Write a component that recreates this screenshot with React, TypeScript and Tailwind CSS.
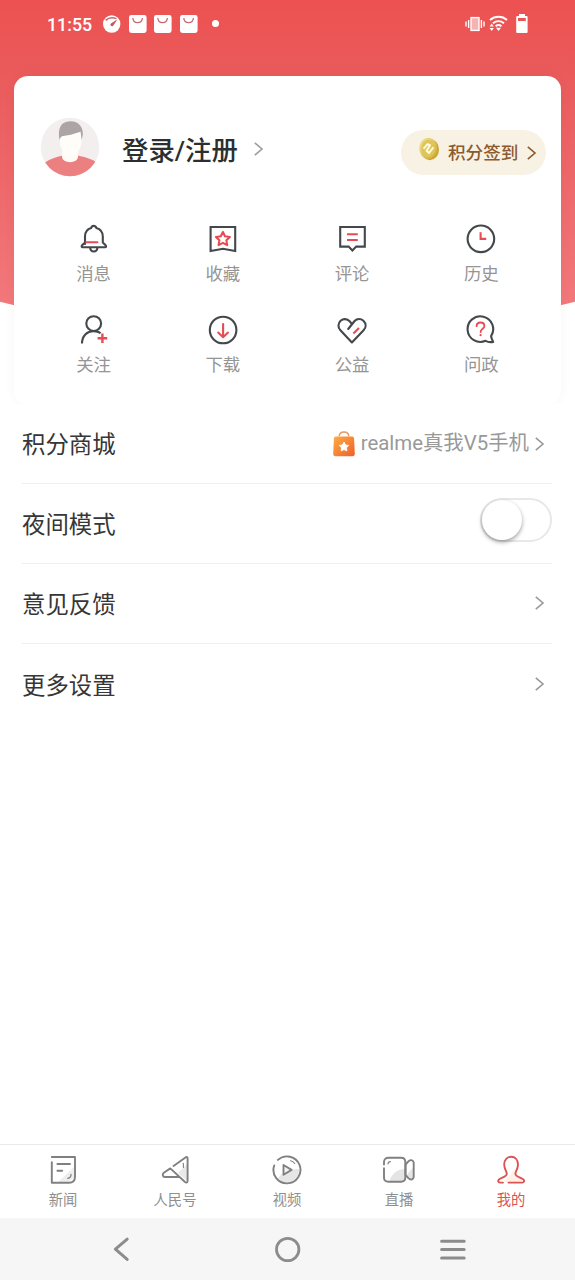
import type { ReactNode } from "react";

const DARK = "#44484a";
const RED = "#e84b52";
const GREY = "#808080";

function Glyph({ children }: { children: ReactNode }) {
  return (
    <svg width="32" height="32" viewBox="0 0 32 32" fill="none" stroke={DARK} strokeWidth="2.1" strokeLinejoin="round" strokeLinecap="round">
      {children}
    </svg>
  );
}

const services: { label: string; icon: ReactNode }[] = [
  {
    label: "消息",
    icon: (
      <Glyph>
        <path d="M7 21V13.5C7 8.8 9.6 6 13.2 5C13.7 3 14.8 2.9 15.7 2.9C16.7 2.9 17.7 3 18.3 5C22 6 24.8 8.8 24.8 13.5V19.5L27.8 22.6C28.4 23.4 28.1 24.3 27.2 24.3H4.6C3.6 24.3 3.3 23.3 3.9 22.6L7 19.4" />
        <path d="M12.2 25C12.4 27.2 13.8 28.5 15.8 28.5C17.8 28.5 19.2 27.2 19.4 25" />
        <path stroke={RED} d="M8.2 19.2H19.4" />
      </Glyph>
    ),
  },
  {
    label: "收藏",
    icon: (
      <Glyph>
        <path strokeLinejoin="miter" d="M3.6 4H28.2V28L16 25.8L3.6 28Z" />
        <path stroke={RED} d="M15.9 9L18 13.2L22.9 14L19.4 17.3L20.2 22.1L15.9 19.9L11.6 22.1L12.4 17.3L8.9 14L13.8 13.2Z" />
      </Glyph>
    ),
  },
  {
    label: "评论",
    icon: (
      <Glyph>
        <path strokeLinejoin="miter" d="M4.2 4H28.8V23.6H20.2L16.4 27.5L12.6 23.6H4.2Z" />
        <path stroke={RED} strokeLinecap="butt" d="M11 11.3H21.8M11 17H21.8" />
      </Glyph>
    ),
  },
  {
    label: "历史",
    icon: (
      <Glyph>
        <circle cx="15.9" cy="15.8" r="13.3" />
        <path stroke={RED} strokeLinejoin="miter" strokeLinecap="butt" d="M15.6 9.3V15.9H21.2" />
      </Glyph>
    ),
  },
  {
    label: "关注",
    icon: (
      <Glyph>
        <circle cx="15.7" cy="9.6" r="7.4" />
        <path strokeLinecap="butt" d="M4 29.5C4 22 9 17.1 15.7 17.1C18.4 17.1 20.8 17.8 22.6 19.2" />
        <path stroke={RED} strokeWidth="2.4" strokeLinecap="butt" d="M24.4 19.4V29M19.6 24.2H29.2" />
      </Glyph>
    ),
  },
  {
    label: "下载",
    icon: (
      <Glyph>
        <circle cx="16.1" cy="16" r="13.3" />
        <path stroke={RED} d="M16.1 10V23.2M11.2 18.6L16.1 23.2L21 18.6" />
      </Glyph>
    ),
  },
  {
    label: "公益",
    icon: (
      <Glyph>
        <path d="M12.2 15L18.6 7C21 4.4 25 4.5 27.4 6.8C30.3 9.6 30.3 13.4 27.6 16.2L15.9 28.5L4.4 16.2C1.7 13.4 1.9 9.4 4.6 6.8C7.2 4.4 11.2 4.6 13.6 7.2L15.5 9.6" />
        <path stroke={RED} strokeLinecap="butt" d="M17.4 19.6L23 14" />
      </Glyph>
    ),
  },
  {
    label: "问政",
    icon: (
      <Glyph>
        <path d="M26.1 22.1A12.8 12.8 0 1 0 20.6 26.8C22.6 28 25.5 28.4 28.2 27.9C27.3 26.4 26.4 24.5 26.1 22.1Z" />
        <path stroke={RED} strokeWidth="1.8" d="M11.6 12.2C11.6 9.8 13.2 8.5 15.5 8.5C17.9 8.5 19.4 10 19.4 12C19.4 14.7 15.6 14.8 15.6 18" />
        <circle cx="15.6" cy="21.2" r="1.1" fill={RED} stroke="none" />
      </Glyph>
    ),
  },
];

function TabGlyph({ children, color = GREY }: { children: ReactNode; color?: string }) {
  return (
    <svg width="32" height="32" viewBox="0 0 32 32" fill="none" stroke={color} strokeWidth="1.9" strokeLinejoin="round" strokeLinecap="round">
      {children}
    </svg>
  );
}

const tabs: { label: string; active?: boolean; icon: ReactNode }[] = [
  {
    label: "新闻",
    icon: (
      <TabGlyph>
        <path fill="#eeeeee" stroke="none" d="M11 28L28 12V22L22 28Z" />
        <path d="M4.8 3H28V22.5C28 26.6 26 28.8 22 28.8H4.8V8.2" />
        <path d="M10.4 10H23M10.4 16.8H15.2" />
        <path strokeWidth="1.3" d="M24 20.5C24 22.8 22.8 24 20.8 24.3" />
      </TabGlyph>
    ),
  },
  {
    label: "人民号",
    icon: (
      <TabGlyph>
        <path fill="#e9e9e9" stroke="none" d="M19 19L28 10V27Z" />
        <path d="M14.5 12L26.5 3.4C27.8 2.6 28.6 3 28.6 4.4V27C28.6 28.8 27.2 29 26 28L11.3 14.4L4.8 18.8C3 20.4 3.6 22.9 6 23H19.5" />
        <path strokeWidth="1.1" d="M24.4 9.2V13.5" />
      </TabGlyph>
    ),
  },
  {
    label: "视频",
    icon: (
      <TabGlyph>
        <path fill="#e6e6e6" stroke="none" d="M7 25C10 18 18 15 28.5 15C28 22 23 28.5 16 28.5C12 28.5 9 27.5 7 25Z" />
        <path d="M6.9 5.9A13.5 13.5 0 1 1 3.2 11.5" />
        <path fill="#f4f4f4" strokeWidth="1.9" d="M12.5 11V20.8L20.6 15.9Z" />
        <path strokeWidth="1.1" d="M19.5 6.8C21.5 7.2 22.8 8.2 23.7 9.5" />
      </TabGlyph>
    ),
  },
  {
    label: "直播",
    icon: (
      <TabGlyph>
        <path fill="#e4e4e4" stroke="none" d="M6.5 27C9 19 15 15 22 15V26L20 27.5ZM24.5 20L30.5 13V25L28.5 26L24.5 22Z" />
        <path d="M1 10.5V8C1 5.3 2.8 3.8 5.5 3.8H18C20.7 3.8 22.3 5.3 22.3 8V23.5C22.3 26.2 20.7 27.7 18 27.7H5.5C2.8 27.7 1 26.2 1 23.5V14.3" />
        <path d="M22.6 10.5L25.6 7.2C27.8 5.3 30.7 6.2 30.7 8.8V22.8C30.7 25.4 27.8 26.3 25.6 24.4L22.6 21Z" />
        <path strokeWidth="1.1" d="M5 10C5 8.6 5.8 7.7 7.4 7.6" />
      </TabGlyph>
    ),
  },
  {
    label: "我的",
    active: true,
    icon: (
      <TabGlyph color="#dc5352">
        <path fill="#fdf1e8" stroke="none" d="M9 27C12 23 18 20 20 14L21 20L27 25V28H10Z" />
        <path d="M8 28.6H5C3.1 28.6 2.8 26.8 3.8 25.6C5.8 23.5 11.8 23 11.8 19.8C11.8 17.5 9.2 15 9.2 10.4C9.2 5.8 12.2 2.8 16.1 2.8C20.1 2.8 23 5.8 23 10.4C23 15 20.4 17.5 20.4 19.8C20.4 23 26.6 23.5 28.6 25.6C29.6 26.8 29.2 28.6 27.3 28.6H13.5" />
      </TabGlyph>
    ),
  },
];

function Chevron({ className }: { className: string }) {
  return (
    <svg className={className} width="10" height="16" viewBox="0 0 10 16" fill="none" stroke="currentColor" strokeWidth="1.6">
      <path d="M.8 1.8L8 8L.8 14.2" />
    </svg>
  );
}

function Bag() {
  return (
    <svg width="18" height="18" viewBox="0 0 18 18">
      <rect width="17.6" height="18" rx="2.4" fill="#fff" />
      <path d="M3.8 3C4.2 9.2 13 9.2 13.4 3" fill="none" stroke="#c9696d" strokeWidth="1.3" />
    </svg>
  );
}

function StatusBar() {
  return (
    <div className="flex h-[76px] items-start justify-between pt-[14px] pr-[47px] pl-[47px]">
      <div className="flex h-[19px] items-center">
        <span className="w-[56px] pt-[2px] text-[17.8px] leading-[19px] font-medium text-white">11:55</span>
        <div className="flex items-center gap-[7.7px]">
          <svg width="18" height="18" viewBox="0 0 18 18">
            <circle cx="8.7" cy="9" r="8.7" fill="#fff" />
            <path d="M2.6 5.4C5.5 2.6 9.5 2.1 13.4 3.6" fill="none" stroke="#c9696d" strokeWidth="1.5" />
            <path d="M14.4 4.2L10.4 10.4C9.3 12.2 6.6 10.6 7.6 8.8Z" fill="#c4585d" />
          </svg>
          <Bag />
          <Bag />
          <Bag />
        </div>
        <span className="ml-[14px] size-[6.5px] rounded-full bg-white" />
      </div>
      <div className="flex h-[19px] items-center">
        <svg width="20" height="16" viewBox="0 0 20 16" fill="none" stroke="#fff" strokeWidth="1.4">
          <rect x="6" y="1.6" width="8" height="12.8" fill="#f5b3b3" />
          <path d="M3.6 4V12M16.4 4V12M1 5.5V10.5M19 5.5V10.5" />
        </svg>
        <svg className="ml-[4px]" width="19" height="17" viewBox="0 0 19 17" fill="none" stroke="#fff" strokeWidth="1.9">
          <path d="M1 5C5.8.7 13.2.7 18 5M4 8.2C7.2 5.4 11.8 5.4 15 8.2M6.6 11.2C8.4 9.8 10.8 9.8 12.5 11.2" />
          <path fill="#fff" stroke="none" d="M9.5 16L7 12.8H12ZM2.7 8.6L4.8 11.6H.6ZM2.7 16L.6 13H4.8Z" />
        </svg>
        <svg className="ml-[8px]" width="12" height="19" viewBox="0 0 12 19">
          <path fill="#fff" fillRule="evenodd" d="M3 0H9V2H10.6Q11.6 2 11.6 3V18Q11.6 19 10.6 19H1.2Q.2 19 .2 18V3Q.2 2 1.2 2H3ZM2 4V7H9.8V4Z" />
        </svg>
      </div>
    </div>
  );
}

function Avatar() {
  return (
    <svg width="60" height="60" viewBox="0 0 60 60">
      <defs>
        <clipPath id="avatar-clip">
          <circle cx="30" cy="30" r="29.2" />
        </clipPath>
      </defs>
      <g clipPath="url(#avatar-clip)">
        <rect width="60" height="60" fill="#f4efef" />
        <path fill="#ec7f80" d="M0 50C8 42 15 40.5 22.5 38.5H38C45 40.5 52 41 60 48V60H0Z" />
        <path fill="#fffcf8" d="M22 34H38V39.5C38 47 22 47 22 39.5Z" />
        <path fill="#fffdf8" d="M20 14H41.5V24C41.5 32 37 37.5 30.5 37.5C24 37.5 20 32 20 24Z" />
        <path fill="#ada4a6" d="M19.5 23C17.5 12 20.5 4.5 30 4.3C38.5 4 43.5 10 42.8 18L41.6 23L40.6 14.8C34 17.2 27.5 18.6 22 19.2C20.6 20 20.2 21 19.5 23Z" />
      </g>
    </svg>
  );
}

function Coin() {
  return (
    <svg width="22" height="24" viewBox="0 0 22 24">
      <defs>
        <linearGradient id="coin" x1="0" y1="0" x2="1" y2="1">
          <stop offset="0" stopColor="#f2e6a0" />
          <stop offset="1" stopColor="#cfa62e" />
        </linearGradient>
      </defs>
      <ellipse cx="11.8" cy="12.6" rx="9.2" ry="10.6" fill="#cba52e" />
      <ellipse cx="10.2" cy="11.3" rx="9" ry="10.6" fill="url(#coin)" />
      <ellipse cx="10.4" cy="11.3" rx="7" ry="8.6" fill="#dfc458" />
      <path d="M5.6 11.6L9.6 7.2L12 8.2L8.6 13.8L11 16L15.4 10.4" fill="none" stroke="#fffbe0" strokeWidth="2" strokeLinejoin="round" />
    </svg>
  );
}

function ShopBag() {
  return (
    <svg width="24" height="26" viewBox="0 0 24 26">
      <defs>
        <linearGradient id="shop" x1="0" y1="0" x2="1" y2="1">
          <stop offset="0" stopColor="#fdac43" />
          <stop offset="1" stopColor="#ee5f2c" />
        </linearGradient>
      </defs>
      <path d="M7.2 5.2C7.6-.4 16.4-.4 16.8 5.2" fill="none" stroke="#e79a69" strokeWidth="1.5" />
      <path d="M4 5.5H20Q22 5.5 22.1 7.5L22.8 22.5Q22.9 25.3 20.3 25.3H3.7Q1.1 25.3 1.2 22.5L1.9 7.5Q2 5.5 4 5.5Z" fill="url(#shop)" />
      <path d="M12 11L13.5 13.9L16.7 14.4L14.5 16.8L14.9 19.9L12 18.6L9.1 19.9L9.5 16.8L7.3 14.4L10.5 13.9Z" fill="#fff" stroke="#fff" strokeWidth=".8" strokeLinejoin="round" />
    </svg>
  );
}

function SettingRow({ label, divider = true, children }: { label: string; divider?: boolean; children: ReactNode }) {
  return (
    <div className={divider ? "flex h-20 items-center justify-between border-b border-[#f0f0f0]" : "flex h-20 items-center justify-between"}>
      <span className="pt-[5px] text-[23.4px] leading-none text-[#363636]">{label}</span>
      {children}
    </div>
  );
}

export default function App() {
  return (
    <div className="relative isolate flex h-[1280px] w-[575px] flex-col overflow-hidden bg-white font-[Roboto,'Noto_Sans_CJK_SC',sans-serif]">
      <svg className="absolute top-0 left-0 -z-10" width="575" height="340" viewBox="0 0 575 340">
        <defs>
          <linearGradient id="header" x1="0" y1="0" x2="0" y2="1">
            <stop offset="0" stopColor="#ed5151" />
            <stop offset=".25" stopColor="#ea5c5d" />
            <stop offset="1" stopColor="#f37c80" />
          </linearGradient>
        </defs>
        <path fill="url(#header)" d="M0 0H575V301.8Q288 376 0 301.8Z" />
      </svg>

      <StatusBar />

      <section className="mx-[14px] h-[328px] rounded-[14px] bg-white px-[15px] shadow-[0_0_14px_rgba(0,0,0,0.035)]">
        <div className="flex h-[144px] items-start">
          <div className="mt-[41px] ml-[11px]">
            <Avatar />
          </div>
          <span className="mt-[61px] ml-[22px] text-[26.4px] leading-[28px] font-medium whitespace-nowrap text-[#2c2f30]">登录/注册</span>
          <Chevron className="mt-[65px] ml-[16px] text-[#9c9c9c]" />
          <div className="mt-[54px] ml-auto flex h-[45px] w-[145px] items-center rounded-full bg-[#f7f2e3] pl-[17px]">
            <div className="-mt-[7px]">
              <Coin />
            </div>
            <span className="ml-[8px] pt-[2px] text-[17.6px] leading-none font-medium whitespace-nowrap text-[#8b5a2f]">积分签到</span>
            <Chevron className="ml-[9px] text-[#8b5a2f]" />
          </div>
        </div>

        <div className="grid grid-cols-4">
          {services.map((s) => (
            <div key={s.label} className="flex h-[91px] flex-col items-center pt-[3px]">
              {s.icon}
              <span className="mt-[10px] text-[17.4px] leading-[18px] text-[#959595]">{s.label}</span>
            </div>
          ))}
        </div>
      </section>

      <section className="flex flex-col bg-white pr-[23px] pl-[22px]">
        <SettingRow label="积分商城">
          <div className="flex items-center pr-[7px] text-[#999999]">
            <ShopBag />
            <span className="ml-[5px] text-[20.4px] leading-none">realme真我V5手机</span>
            <Chevron className="ml-[6px]" />
          </div>
        </SettingRow>
        <SettingRow label="夜间模式">
          <div className="-mt-[7px] flex h-[44px] w-[72px] items-center rounded-full border-2 border-[#e8e8e8] bg-white">
            <span className="size-[40px] rounded-full bg-white shadow-[0_2px_4px_rgba(0,0,0,0.38)]" />
          </div>
        </SettingRow>
        <SettingRow label="意见反馈">
          <Chevron className="-mt-px mr-[7px] text-[#999999]" />
        </SettingRow>
        <SettingRow label="更多设置" divider={false}>
          <Chevron className="-mt-px mr-[7px] text-[#999999]" />
        </SettingRow>
      </section>

      <nav className="mt-auto grid h-[74px] grid-cols-5 border-t border-[#e9e9e9] pr-[8px] pl-[7px]">
        {tabs.map((t) => (
          <div key={t.label} className="flex flex-col items-center pt-[9px]">
            {t.icon}
            <span className={t.active ? "mt-[7px] text-[14.3px] leading-[15px] text-[#dc5352]" : "mt-[7px] text-[14.3px] leading-[15px] text-[#8f8f8f]"}>{t.label}</span>
          </div>
        ))}
      </nav>

      <div className="flex h-[62px] items-center bg-[#f6f6f6] pl-[112px] text-[#8c8c8c]">
        <svg width="18" height="26" viewBox="0 0 18 26" fill="none" stroke="currentColor" strokeWidth="3" strokeLinecap="round" strokeLinejoin="round">
          <path d="M15.2 3.2L3.4 13.2L15.2 23.4" />
        </svg>
        <svg className="ml-[144px]" width="28" height="28" viewBox="0 0 28 28" fill="none" stroke="currentColor" strokeWidth="2.8">
          <circle cx="13.7" cy="14.5" r="11.2" />
        </svg>
        <svg className="ml-[137px]" width="28" height="26" viewBox="0 0 28 26" fill="none" stroke="currentColor" strokeWidth="3" strokeLinecap="round">
          <path d="M2.6 5.3H25.2M2.6 13.5H25.2M2.6 22H25.2" />
        </svg>
      </div>
    </div>
  );
}
